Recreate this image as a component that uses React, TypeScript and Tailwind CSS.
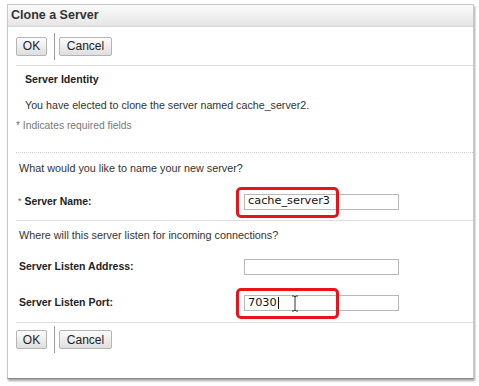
import React from "react";

const font = { fontFamily: '"Liberation Sans", Arial, sans-serif' };

const Btn = ({ label, w }: { label: string; w: string }) => (
  <button
    className={`${w} h-[19px] border border-[#b4b4b4] rounded-[2px] bg-gradient-to-b from-[#fdfdfd] to-[#dedede] text-[12px] text-[#222] leading-none flex items-center justify-center`}
  >
    {label}
  </button>
);

const ButtonBar = () => (
  <div className="flex items-center h-full">
    <Btn label="OK" w="w-[31px]" />
    <div className="w-px h-[27px] bg-[#9a9a9a] ml-[7px] mr-[4px]" />
    <Btn label="Cancel" w="w-[53px]" />
  </div>
);

const Field = ({ value, highlight, caret }: { value?: string; highlight?: boolean; caret?: boolean }) => (
  <div className="relative">
    <div
      className="w-[155px] h-[16px] border border-[#b8b8b8] bg-white flex items-center pl-[3px] text-[11.3px] text-[#111]"
      style={{ fontFamily: '"DejaVu Sans", sans-serif' }}
    >
      {value}
      {caret && <span className="inline-block w-px h-[12px] bg-[#111] ml-px" />}
      {caret && (
        <svg className="absolute left-[47px] top-[0px]" width="8" height="17" viewBox="0 0 8 17">
          <path d="M1 1h2l1 1 1-1h2M4 2v13M1 16h2l1-1 1 1h2" fill="none" stroke="#333" strokeWidth="1" />
        </svg>
      )}
    </div>
    {highlight && (
      <div className="absolute left-[-8px] top-[-7px] w-[103px] h-[31px] border-[3px] border-[#e8141c] rounded-[5px]" />
    )}
  </div>
);

const Row = ({ h, children }: { h: string; children: React.ReactNode }) => (
  <div className={`${h} flex items-center`}>{children}</div>
);

export default function App() {
  return (
    <div className="w-[479px] h-[386px] bg-white pt-[4px] pl-[7px]" style={font}>
      <div className="w-[467px] h-[375px] border border-[#c9c9c9] border-b-[#8a8a8a] shadow-[1px_2px_2px_rgba(0,0,0,0.35)] bg-white flex flex-col">
        <div className="h-[22px] bg-gradient-to-b from-[#fafafa] to-[#e6e6e6] border-b border-[#d6d6d6] flex items-center pl-[3px] text-[12.5px] font-bold text-[#333]">
          Clone a Server
        </div>
        <div className="pl-[8px] flex flex-col">
          <div className="h-[39px] border-b border-[#dcdcdc]">
            <ButtonBar />
          </div>
          <Row h="h-[27px]">
            <span className="pl-[9px] text-[10.6px] font-bold text-[#222]">Server Identity</span>
          </Row>
          <Row h="h-[25px]">
            <span className="pl-[9px] text-[10.7px] text-[#333]">
              You have elected to clone the server named cache_server2.
            </span>
          </Row>
          <Row h="h-[16px]">
            <span className="text-[10.3px] text-[#777]">* Indicates required fields</span>
          </Row>
          <div className="h-[19px] border-b border-dotted border-[#cfcfcf]" />
          <Row h="h-[30px]">
            <span className="pl-[3px] text-[10.8px] text-[#333]">What would you like to name your new server?</span>
          </Row>
          <Row h="h-[37px]">
            <div className="w-[228px] pl-[2px] flex items-center text-[10.4px] font-bold text-[#222]">
              <span className="text-[9px] font-normal text-[#666] mr-[3px]">*</span>Server Name:
            </div>
            <Field value="cache_server3" highlight />
          </Row>
          <div className="h-[1px] bg-[#dedede]" />
          <Row h="h-[28px]">
            <span className="pl-[3px] text-[10.8px] text-[#333]">Where will this server listen for incoming connections?</span>
          </Row>
          <Row h="h-[35px]">
            <div className="w-[228px] pl-[3px] text-[10.5px] font-bold text-[#222]">Server Listen Address:</div>
            <Field />
          </Row>
          <Row h="h-[38px]">
            <div className="w-[228px] pl-[3px] text-[10.5px] font-bold text-[#222]">Server Listen Port:</div>
            <Field value="7030" highlight caret />
          </Row>
          <div className="h-[1px] bg-[#dedede]" />
          <div className="h-[33px]">
            <ButtonBar />
          </div>
        </div>
      </div>
    </div>
  );
}
